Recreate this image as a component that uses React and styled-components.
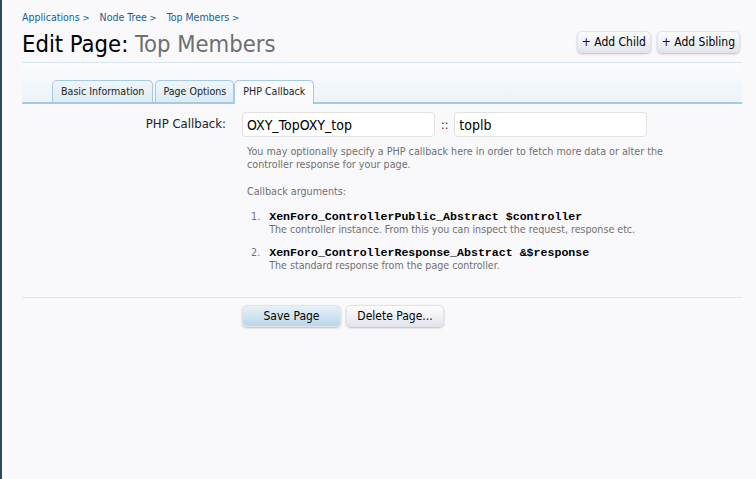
import React from 'react';
import styled, { createGlobalStyle } from 'styled-components';

const GlobalStyle = createGlobalStyle`
  html, body {
    margin: 0;
    padding: 0;
    background: #f9f9fc;
  }
  body {
    font-family: "DejaVu Sans Condensed", "DejaVu Sans", "Liberation Sans", sans-serif;
    font-size: 11px;
    color: #000;
  }
`;

const Frame = styled.div`
  min-height: 479px;
  border-left: 2px solid #2b485c;
  background: #f9f9fc;
  box-sizing: border-box;
`;

const Content = styled.div`
  padding: 11px 14px 0 20px;
`;

const Breadcrumb = styled.div`
  display: flex;
  gap: 10px;
  font-size: 10.5px;
  color: #176093;
  height: 14px;
`;

const Crumb = styled.span`
  &::after {
    content: ' >';
    font-size: 9.5px;
  }
`;

const TitleBar = styled.div`
  display: flex;
  align-items: flex-end;
  justify-content: space-between;
  padding-bottom: 5px;
  border-bottom: 1px solid #d7e8f5;
`;

const Title = styled.h1`
  margin: 7px 0 0;
  font-size: 23.6px;
  font-weight: normal;
  color: #000;
  line-height: 25px;
`;

const TitleSub = styled.span`
  color: #6f6f6f;
`;

const TopButtons = styled.div`
  display: flex;
  gap: 6px;
  padding: 0 2px 4px 0;
`;

const Button = styled.button`
  font-family: inherit;
  font-size: 12px;
  color: #000;
  height: 22px;
  padding: 0 ${p => p.$pad ?? 6}px;
  min-width: ${p => p.$w || 0}px;
  border: 1px solid #e3e3ea;
  border-radius: 5px;
  background: ${p => (p.$primary
    ? 'linear-gradient(to bottom, #e6f1f8, #b9d7ea)'
    : 'linear-gradient(to bottom, #fdfdff, #e4e4ee)')};
  box-shadow: 0 1px 2px rgba(0, 0, 0, 0.25);
  cursor: pointer;
`;

const TabBar = styled.div`
  display: flex;
  align-items: flex-end;
  height: 39px;
  padding-left: 30px;
  background: linear-gradient(to bottom, #fbfcfe, #ecf3fa);
  border-bottom: 2px solid #a5cae4;
`;

const Tab = styled.div`
  line-height: 21px;
  padding: 0 ${p => p.$pad ?? 8}px;
  margin-left: ${p => p.$ml ?? 0}px;
  font-size: 10.6px;
  color: #222;
  background: ${p => (p.$active ? '#f9fbfe' : 'linear-gradient(to bottom, #f0f6fb, #dcebf6)')};
  border: 1px solid #a5cae4;
  border-bottom: none;
  border-radius: 5px 5px 0 0;
  margin-bottom: ${p => (p.$active ? '-2px' : '0')};
  height: ${p => (p.$active ? '23px' : '21px')};
`;

const Form = styled.div`
  padding-top: 8px;
`;

const Row = styled.div`
  display: grid;
  grid-template-columns: 220px 1fr;
`;

const Label = styled.div`
  text-align: right;
  padding-right: 16px;
  font-size: 13px;
  line-height: 24px;
  color: #222;
`;

const Field = styled.div`
  display: flex;
  flex-direction: column;
`;

const Inputs = styled.div`
  display: flex;
  align-items: center;
  gap: 6px;
`;

const Input = styled.input`
  width: 193px;
  height: 25px;
  box-sizing: border-box;
  padding: 0 4px;
  font-family: inherit;
  font-size: 14px;
  color: #000;
  background: #fff;
  border: 1px solid #e1e1e1;
  border-radius: 4px;
  outline: none;
`;

const Sep = styled.span`
  font-size: 12px;
  color: #222;
`;

const Explain = styled.p`
  margin: ${p => p.$mt ?? 8}px 0 0 5px;
  width: 430px;
  font-size: 10.7px;
  line-height: 13px;
  color: #707070;
`;

const ArgList = styled.ol`
  margin: 12px 0 0;
  padding: 0 0 0 9px;
  list-style: none;
`;

const Arg = styled.li`
  display: flex;
  gap: 9px;
  margin-bottom: 10px;
`;

const ArgNum = styled.span`
  font-size: 10.7px;
  color: #707070;
  line-height: 13px;
`;

const ArgBody = styled.div`
  display: flex;
  flex-direction: column;
`;

const ArgCode = styled.code`
  font-family: "Liberation Mono", "Courier New", monospace;
  font-weight: bold;
  font-size: 11.6px;
  line-height: 13px;
  color: #000;
`;

const ArgDesc = styled.span`
  font-size: 10.6px;
  line-height: 13px;
  color: #707070;
`;

const Divider = styled.div`
  margin-top: 15px;
  border-top: 1px solid #d4eaf7;
`;

const SubmitRow = styled.div`
  display: flex;
  gap: 5px;
  padding: 7px 0 0 220px;
`;

const args = [
  {
    code: 'XenForo_ControllerPublic_Abstract $controller',
    desc: 'The controller instance. From this you can inspect the request, response etc.',
  },
  {
    code: 'XenForo_ControllerResponse_Abstract &$response',
    desc: 'The standard response from the page controller.',
  },
];

const App = () => (
  <>
    <GlobalStyle />
    <Frame>
      <Content>
        <Breadcrumb>
          <Crumb>Applications</Crumb>
          <Crumb>Node Tree</Crumb>
          <Crumb>Top Members</Crumb>
        </Breadcrumb>
        <TitleBar>
          <Title>
            Edit Page: <TitleSub>Top Members</TitleSub>
          </Title>
          <TopButtons>
            <Button $pad={4}>+ Add Child</Button>
            <Button $pad={4}>+ Add Sibling</Button>
          </TopButtons>
        </TitleBar>
        <TabBar>
          <Tab>Basic Information</Tab>
          <Tab $pad={7} $ml={2}>Page Options</Tab>
          <Tab $active>PHP Callback</Tab>
        </TabBar>
        <Form>
          <Row>
            <Label>PHP Callback:</Label>
            <Field>
              <Inputs>
                <Input defaultValue="OXY_TopOXY_top" />
                <Sep>::</Sep>
                <Input defaultValue="toplb" />
              </Inputs>
              <Explain $mt={8}>
                You may optionally specify a PHP callback here in order to fetch more data or alter the
                controller response for your page.
              </Explain>
              <Explain $mt={14}>Callback arguments:</Explain>
              <ArgList>
                {args.map((a, i) => (
                  <Arg key={i}>
                    <ArgNum>{i + 1}.</ArgNum>
                    <ArgBody>
                      <ArgCode>{a.code}</ArgCode>
                      <ArgDesc>{a.desc}</ArgDesc>
                    </ArgBody>
                  </Arg>
                ))}
              </ArgList>
            </Field>
          </Row>
          <Divider />
          <SubmitRow>
            <Button $primary $w={99}>Save Page</Button>
            <Button $w={98}>Delete Page...</Button>
          </SubmitRow>
        </Form>
      </Content>
    </Frame>
  </>
);

export default App;
